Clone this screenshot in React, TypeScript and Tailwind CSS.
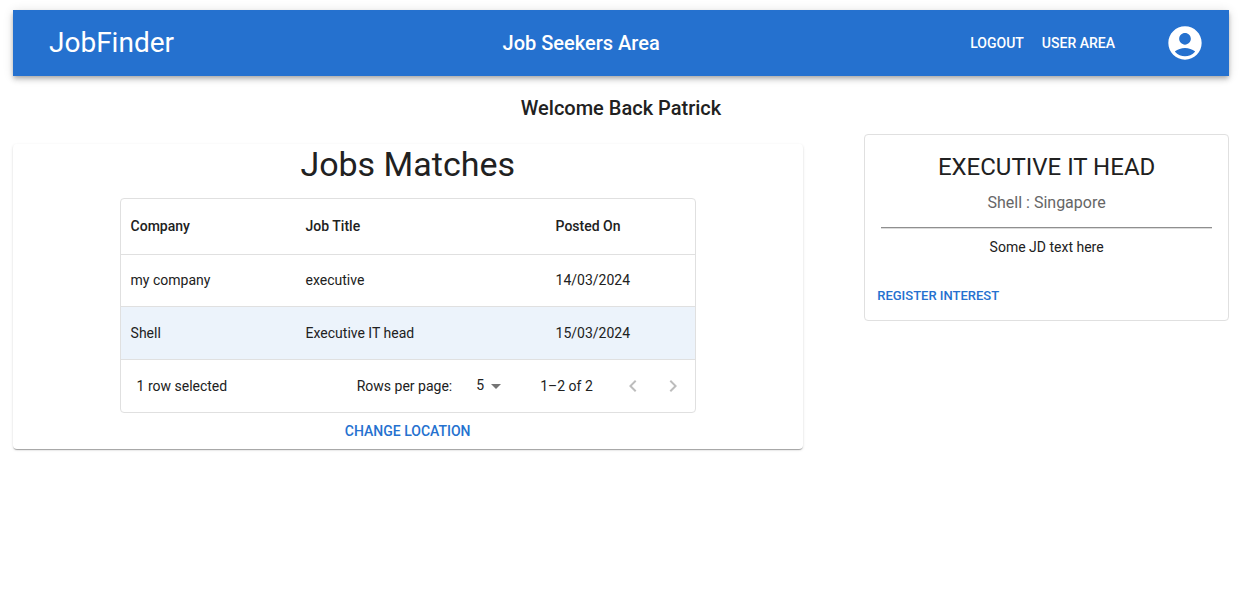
import { useState } from "react";
import { MdAccountCircle, MdArrowDropDown, MdKeyboardArrowLeft, MdKeyboardArrowRight } from "react-icons/md";

type Job = { company: string; title: string; postedOn: string };

const jobs: Job[] = [
  { company: "my company", title: "executive", postedOn: "14/03/2024" },
  { company: "Shell", title: "Executive IT head", postedOn: "15/03/2024" },
];

function Header() {
  return (
    <header className="flex h-[66px] items-center bg-[#2571cf] pr-6 pl-9 text-white shadow-[0_2px_4px_-1px_rgba(0,0,0,0.2),0_4px_5px_0_rgba(0,0,0,0.14),0_1px_10px_0_rgba(0,0,0,0.12)]">
      <div className="flex flex-1 items-center justify-between">
        <a href="#" className="pr-[26px] text-[28px] leading-10">JobFinder</a>
        <h1 className="text-xl font-medium">Job Seekers Area</h1>
        <nav className="flex gap-0.5 text-sm font-medium">
          <button type="button" className="px-2 py-1.5">LOGOUT</button>
          <button type="button" className="px-2 py-1.5">USER AREA</button>
        </nav>
      </div>
      <button type="button" aria-label="Account" className="ml-[42px]">
        <MdAccountCircle className="size-10" />
      </button>
    </header>
  );
}

function JobsTable() {
  const [selected, setSelected] = useState(1);
  return (
    <div className="mx-auto w-[73%] overflow-hidden rounded border border-[#e0e0e0] text-sm">
      <table className="w-full table-fixed border-collapse text-left">
        <thead>
          <tr className="h-[55px] border-b border-[#e0e0e0]">
            <th className="w-[175px] px-2.5 font-medium">Company</th>
            <th className="w-[250px] px-2.5 font-medium">Job Title</th>
            <th className="px-2.5 font-medium">Posted On</th>
          </tr>
        </thead>
        <tbody>
          {jobs.map((job, i) => (
            <tr
              key={job.company}
              onClick={() => setSelected(i)}
              className={`h-[52px] cursor-pointer border-b border-[#e0e0e0] last:h-[53px] ${selected === i ? "bg-[#ecf3fb]" : ""}`}
            >
              <td className="px-2.5">{job.company}</td>
              <td className="px-2.5">{job.title}</td>
              <td className="px-2.5">{job.postedOn}</td>
            </tr>
          ))}
        </tbody>
      </table>
      <div className="flex h-[52px] items-center pr-0.5 pl-4">
        <span className="flex-1">1 row selected</span>
        <label htmlFor="rows">Rows per page:</label>
        <div className="relative mr-8 ml-4">
          <select id="rows" defaultValue="5" className="block h-8 w-10 appearance-none pb-0.5 pl-2 outline-none">
            <option>5</option>
            <option>10</option>
          </select>
          <MdArrowDropDown className="pointer-events-none absolute top-1 right-0 size-6 text-[#757575]" />
        </div>
        <span>1–2 of 2</span>
        <div className="ml-5 flex text-[#bdbdbd]">
          <button type="button" disabled aria-label="Previous page" className="p-2">
            <MdKeyboardArrowLeft className="size-6" />
          </button>
          <button type="button" disabled aria-label="Next page" className="p-2">
            <MdKeyboardArrowRight className="size-6" />
          </button>
        </div>
      </div>
    </div>
  );
}

export default function App() {
  return (
    <div className="bg-white pt-2.5 pr-[18px] pb-8 pl-[13px] font-[Roboto,sans-serif] text-[#212121]">
      <Header />
      <h2 className="mt-4 text-center text-xl leading-8 font-medium">Welcome Back Patrick</h2>
      <main className="mt-2.5 flex items-start justify-between">
        <section className="mt-2.5 w-[65%] rounded pr-px text-center shadow-[0_2px_1px_-1px_rgba(0,0,0,0.2),0_1px_1px_0_rgba(0,0,0,0.14),0_1px_3px_0_rgba(0,0,0,0.12)]">
          <h2 className="mb-3.5 text-[34px] leading-10">Jobs Matches</h2>
          <div className="text-left">
            <JobsTable />
          </div>
          <button type="button" className="px-2 py-1.5 text-sm leading-6 font-medium text-[#2571cf]">
            CHANGE LOCATION
          </button>
        </section>
        <aside className="w-[30%] rounded border border-[#e0e0e0] pb-2">
          <div className="px-4 pt-4 pb-[23px] text-center">
            <h3 className="text-2xl leading-8">EXECUTIVE IT HEAD</h3>
            <p className="mt-2 leading-6 text-[#666666]">Shell : Singapore</p>
            <hr className="mt-3 mb-2 h-0.5 border-t border-b border-t-[#8f8f8f] border-b-[#dcdcdc]" />
            <p className="text-sm leading-5">Some JD text here</p>
          </div>
          <button type="button" className="ml-2 px-1 py-1 text-[13px] leading-6 font-medium text-[#2571cf]">
            REGISTER INTEREST
          </button>
        </aside>
      </main>
    </div>
  );
}
